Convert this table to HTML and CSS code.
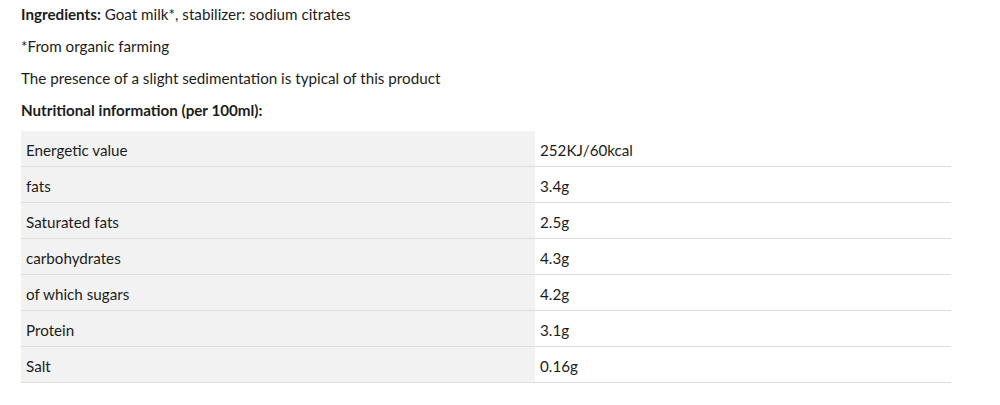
FILE: index.html
```html
<!DOCTYPE html>
<html lang="en">
<head>
<meta charset="utf-8">
<title>Product information</title>
<link rel="stylesheet" href="styles.css">
</head>
<body>
<div class="content">
  <p class="line"><strong>Ingredients:</strong> Goat milk*, stabilizer: sodium citrates</p>
  <p class="line">*From organic farming</p>
  <p class="line">The presence of a slight sedimentation is typical of this product</p>
  <p class="line"><strong>Nutritional information (per 100ml):</strong></p>
  <table class="nutrition">
    <tbody>
      <tr><td class="label">Energetic value</td><td class="value">252KJ/60kcal</td></tr>
      <tr><td class="label">fats</td><td class="value">3.4g</td></tr>
      <tr><td class="label">Saturated fats</td><td class="value">2.5g</td></tr>
      <tr><td class="label">carbohydrates</td><td class="value">4.3g</td></tr>
      <tr><td class="label">of which sugars</td><td class="value">4.2g</td></tr>
      <tr><td class="label">Protein</td><td class="value">3.1g</td></tr>
      <tr><td class="label">Salt</td><td class="value">0.16g</td></tr>
    </tbody>
  </table>
</div>
</body>
</html>
```
FILE: styles.css
```css
html, body {
  margin: 0;
  padding: 0;
  background: #ffffff;
}
body {
  font-family: Lato, "Liberation Sans", sans-serif;
  font-size: 15.2px;
  color: #1c1c1c;
}
.content {
  padding: 3px 0 0 21px;
  width: 930px;
}
.line {
  margin: 0 0 10px 0;
  line-height: 22px;
}
.line strong {
  font-weight: 700;
}
.nutrition {
  width: 930px;
  margin-top: 1px;
  border-collapse: separate;
  border-spacing: 0;
}
.nutrition td {
  box-sizing: border-box;
  height: 36px;
  padding: 2px 5px 0 5px;
  border-bottom: 1px solid #dedede;
  vertical-align: middle;
  line-height: 22px;
}
.nutrition .label {
  width: 514px;
  background: #f2f2f2;
}
.nutrition .value {
  background: #ffffff;
}
```
